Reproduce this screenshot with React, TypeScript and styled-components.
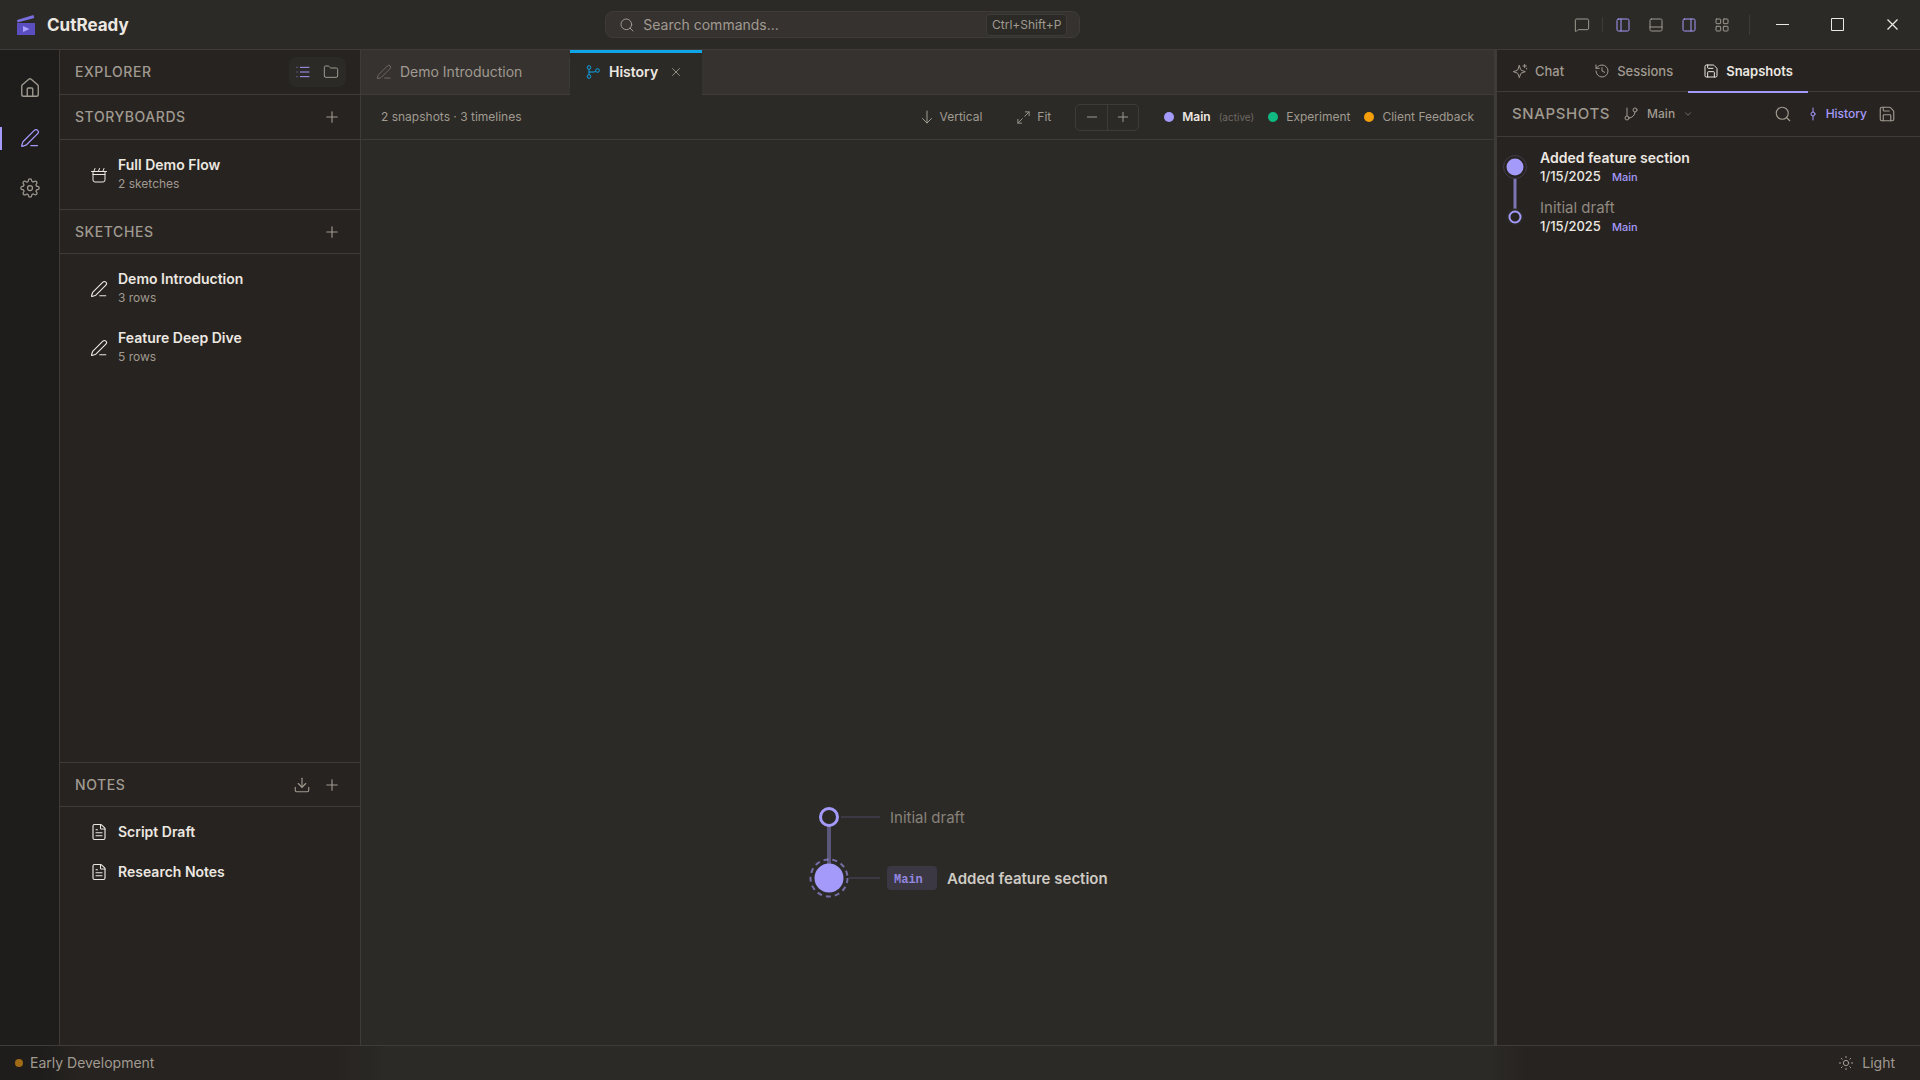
import React from 'react';
import styled, { createGlobalStyle, css } from 'styled-components';
import {
  ChevronDown, Download, FileText, Folder, GitBranch, GitCommitVertical, House, LayoutGrid, List,
  Maximize2, MessageSquare, Minus, PanelBottom, PanelLeft, PanelRight, PenLine, Plus, History,
  Save, Search, Sun, X,
} from 'lucide-react';

const c = {
  rail: '#1e1d1b',
  side: '#272320',
  main: '#2b2a27',
  raised: '#363230',
  line: '#3f3b38',
  text: '#ece8e1',
  dim: '#a09a90',
  faint: '#6e6963',
  accent: '#a49afa',
  blue: '#0ea5e9',
};

const Global = createGlobalStyle`
  *, *::before, *::after { box-sizing: border-box; }
  html, body, #root { height: 100%; margin: 0; }
  body { background: ${c.main}; color: ${c.text}; font: 14px/20px Inter, "Liberation Sans", sans-serif; overflow: hidden; }
  button { font: inherit; color: inherit; background: none; border: 0; padding: 0; cursor: pointer; }
  h1, h2, ul, p { margin: 0; padding: 0; list-style: none; }
  svg { flex: none; display: block; }
`;

const Shell = styled.div`
  display: flex;
  flex-direction: column;
  height: 100%;
`;

const TitleBar = styled.header`
  display: flex;
  align-items: center;
  height: 50px;
  flex: none;
  border-bottom: 1px solid ${c.line};
`;

const Brand = styled.h1`
  display: flex;
  align-items: center;
  gap: 11px;
  padding-left: 16px;
  font-size: 17px;
  font-weight: 700;
`;

const SearchArea = styled.div`
  display: flex;
  flex: 1;
  justify-content: center;
  padding-right: 8px;
`;

const SearchBox = styled.label`
  display: flex;
  align-items: center;
  gap: 8px;
  width: 475px;
  height: 27px;
  padding: 0 12px 0 13px;
  color: ${c.dim};
  background: ${c.raised};
  border: 1px solid ${c.line};
  border-radius: 8px;
`;

const SearchInput = styled.input`
  flex: 1;
  min-width: 0;
  padding: 0;
  font: inherit;
  color: inherit;
  background: none;
  border: 0;
  outline: 0;
  &::placeholder { color: ${c.dim}; opacity: 1; }
`;

const Shortcut = styled.kbd`
  padding: 0 5px;
  font: 12px/20px Inter, sans-serif;
  background: ${c.main};
  border: 1px solid ${c.line};
  border-radius: 4px;
`;

const LayoutControls = styled.div`
  display: flex;
  align-items: center;
`;

const ToolButton = styled.button<{ $on?: boolean }>`
  display: grid;
  place-items: center;
  width: 33px;
  height: 32px;
  color: ${p => (p.$on ? c.accent : c.dim)};
`;

const Rule = styled.span<{ $tall?: boolean }>`
  width: 1px;
  height: ${p => (p.$tall ? 20 : 15)}px;
  margin: ${p => (p.$tall ? '0 5px 0 11px' : '0 3px 0 4px')};
  background: ${c.line};
`;

const WindowButton = styled.button`
  display: grid;
  place-items: center;
  width: 55px;
  height: 49px;
`;

const Body = styled.div`
  display: flex;
  flex: 1;
  min-height: 0;
`;

const Rail = styled.nav`
  display: flex;
  flex-direction: column;
  width: 60px;
  padding-top: 13px;
  background: ${c.rail};
  border-right: 1px solid ${c.line};
`;

const RailButton = styled.button<{ $on?: boolean }>`
  display: grid;
  place-items: center;
  height: 50px;
  color: ${p => (p.$on ? c.accent : c.dim)};
  ${p => p.$on && css`background: linear-gradient(${c.accent}, ${c.accent}) left center / 2px 23px no-repeat;`}
`;

const Sidebar = styled.aside`
  display: flex;
  flex-direction: column;
  width: 301px;
  background: ${c.side};
  border-right: 1px solid ${c.line};
`;

const Section = styled.section<{ $grow?: boolean; $pane?: boolean }>`
  flex: ${p => (p.$grow ? '1' : p.$pane ? '0 0 283px' : 'none')};
  & + & { border-top: 1px solid ${c.line}; }
`;

const PanelHead = styled.div<{ $flush?: boolean }>`
  display: flex;
  align-items: center;
  justify-content: space-between;
  height: ${p => (p.$flush ? 44 : 45)}px;
  padding: 0 14px 0 15px;
  color: ${c.dim};
  border-bottom: 1px solid ${c.line};
`;

const SnapshotsHead = styled(PanelHead)`
  padding-right: 19px;
`;

const Heading = styled.h2<{ $large?: boolean }>`
  font-size: ${p => (p.$large ? 15 : 14)}px;
  font-weight: 500;
  letter-spacing: 0.04em;
  text-transform: uppercase;
`;

const Actions = styled.div`
  display: flex;
  align-items: center;
  gap: 2px;
`;

const IconButton = styled.button<{ $on?: boolean }>`
  display: grid;
  place-items: center;
  width: 28px;
  height: 28px;
  color: ${p => (p.$on ? c.accent : 'inherit')};
`;

const ViewSwitch = styled.div`
  display: flex;
  height: 30px;
  padding-right: 1px;
  align-items: center;
  border-radius: 8px;
  background: ${c.main};
`;

const Items = styled.ul`
  padding: 5px 0;
`;

const Item = styled.button`
  display: flex;
  align-items: center;
  gap: 10px;
  width: 100%;
  padding: 10px 30px;
  text-align: left;
`;

const ItemTitle = styled.span`
  display: block;
  font-weight: 600;
`;

const Meta = styled.span`
  display: block;
  padding-bottom: 2px;
  font-size: 12px;
  line-height: 17px;
  color: ${c.dim};
`;

const Main = styled.main`
  display: flex;
  flex-direction: column;
  flex: 1;
  min-width: 0;
`;

const TabStrip = styled.div`
  display: flex;
  height: 45px;
  background: linear-gradient(${c.line}, ${c.line}) left bottom / 100% 1px no-repeat ${c.raised};
`;

const EditorTab = styled.div<{ $on?: boolean }>`
  display: flex;
  align-items: center;
  gap: 8px;
  padding: 0 16px 1px 15px;
  color: ${c.dim};
  background: linear-gradient(${c.line}, ${c.line}) right center / 1px 29px no-repeat;
  min-width: 209px;
  ${p => p.$on && css`
    min-width: 0;
    color: ${c.text};
    font-weight: 600;
    background: ${c.main};
    box-shadow: inset 0 3px ${c.blue};
  `}
`;

const TabLabel = styled.button`
  display: flex;
  align-items: center;
  gap: 8px;
`;

const TabPen = styled(PenLine)`
  opacity: 0.8;
`;

const CloseTab = styled.button`
  display: grid;
  place-items: center;
  width: 20px;
  height: 20px;
  color: ${c.dim};
`;

const Toolbar = styled.div`
  display: flex;
  align-items: center;
  height: 45px;
  padding: 0 20px;
  font-size: 12px;
  color: ${c.dim};
  border-bottom: 1px solid ${c.line};
`;

const Summary = styled.p`
  flex: 1;
`;

const TextButton = styled.button`
  display: flex;
  align-items: center;
  gap: 6px;
  margin-right: 34px;
`;

const Zoom = styled.div`
  display: flex;
  margin: 0 25px 0 -10px;
  border: 1px solid ${c.line};
  border-radius: 5px;
`;

const ZoomButton = styled.button`
  display: grid;
  place-items: center;
  width: 31px;
  height: 25px;
  & + & { border-left: 1px solid ${c.line}; }
`;

const Legend = styled.ul`
  display: flex;
  gap: 14px;
`;

const LegendItem = styled.li<{ $color: string }>`
  display: flex;
  align-items: center;
  gap: 8px;
  &::before {
    content: '';
    width: 10px;
    height: 10px;
    border-radius: 50%;
    background: ${p => p.$color};
  }
`;

const Strong = styled.strong`
  font-weight: 600;
  color: ${c.text};
`;

const Small = styled.small`
  font-size: 10px;
  color: ${c.faint};
`;

const Canvas = styled.div`
  position: relative;
  flex: 1;
`;

const Graph = styled.svg`
  position: absolute;
  left: calc(50% - 119px);
  bottom: 147px;
  overflow: visible;
`;

const Panel = styled.aside`
  display: flex;
  flex-direction: column;
  width: 426px;
  background: ${c.side};
  border-left: 3px solid ${c.line};
`;

const PanelTabs = styled.div`
  display: flex;
  height: 42px;
  border-bottom: 1px solid ${c.line};
`;

const PanelTab = styled.button<{ $on?: boolean }>`
  display: flex;
  align-items: center;
  gap: 7px;
  height: 43px;
  padding: 0 15px;
  font-size: 13px;
  font-weight: ${p => (p.$on ? 600 : 500)};
  color: ${p => (p.$on ? c.text : c.dim)};
  border-bottom: 2px solid ${p => (p.$on ? c.accent : 'transparent')};
`;

const BranchButton = styled.button`
  display: flex;
  align-items: center;
  gap: 8px;
  margin: 0 auto 0 13px;
  font-size: 12px;
  font-weight: 500;
`;

const HistoryButton = styled.button`
  display: flex;
  align-items: center;
  gap: 5px;
  margin: 0 4px 0 6px;
  font-size: 12px;
  font-weight: 500;
  color: ${c.accent};
`;

const Snapshots = styled.ul`
  padding: 11px 0;
`;

const SnapshotRow = styled.li`
  display: flex;
  gap: 8px;
  height: 50px;
  padding-left: 3px;
`;

const SnapshotTitle = styled.p<{ $on?: boolean }>`
  font-size: ${p => (p.$on ? 14 : 15)}px;
  font-weight: ${p => (p.$on ? 600 : 400)};
  color: ${p => (p.$on ? c.text : '#8f8980')};
`;

const SnapshotMeta = styled.p`
  display: flex;
  gap: 11px;
  font-size: 13px;
  line-height: 16px;
  font-weight: 500;
`;

const Tag = styled.span`
  font-size: 11px;
  line-height: 18px;
  color: ${c.accent};
`;

const Status = styled.footer`
  display: flex;
  align-items: center;
  justify-content: space-between;
  height: 35px;
  flex: none;
  padding: 0 25px 0 15px;
  color: ${c.dim};
  border-top: 1px solid ${c.line};
  background: linear-gradient(90deg, ${c.rail} 40px, ${c.side} 80px, ${c.side} 335px, ${c.main} 385px,
    ${c.main} calc(100% - 430px), ${c.side} calc(100% - 395px));
`;

const StatusItem = styled.span`
  display: flex;
  align-items: center;
  gap: 7px;
`;

const Dot = styled.i`
  width: 8px;
  height: 8px;
  border-radius: 50%;
  background: #a16a14;
`;

const ThemeButton = styled.button`
  display: flex;
  align-items: center;
  gap: 8px;
`;

const Logo = () => (
  <svg width="20" height="24" viewBox="0 0 20 24">
    <path d="M1 7 17.500 2l.8 3L1.600 9.500z" fill="#7b6fe0" />
    <path d="M1 10h18v12H1z" fill="#5a4ec0" />
    <path d="M7 13v6l6.500-3z" fill="#a9a0ff" />
  </svg>
);

const GearIcon = () => (
  <svg width="20" height="20" viewBox="0 0 24 24" fill="none" stroke="currentColor" strokeWidth="1.500" strokeLinecap="round" strokeLinejoin="round" overflow="visible">
    <circle cx="12" cy="12" r="3" />
    <path d="M19.4 15a1.65 1.65 0 0 0 .33 1.820l.06.06a2 2 0 0 1 0 2.830 2 2 0 0 1-2.830 0l-.06-.06a1.650 1.650 0 0 0-1.820-.33 1.650 1.650 0 0 0-1 1.510V21a2 2 0 0 1-2 2 2 2 0 0 1-2-2v-.09A1.650 1.650 0 0 0 9 19.400a1.650 1.650 0 0 0-1.820.33l-.06.06a2 2 0 0 1-2.830 0 2 2 0 0 1 0-2.830l.06-.06a1.650 1.650 0 0 0 .33-1.820 1.650 1.650 0 0 0-1.510-1H3a2 2 0 0 1-2-2 2 2 0 0 1 2-2h.09A1.650 1.650 0 0 0 4.600 9a1.650 1.650 0 0 0-.33-1.820l-.06-.06a2 2 0 0 1 0-2.830 2 2 0 0 1 2.830 0l.06.06a1.650 1.650 0 0 0 1.820.33H9a1.650 1.650 0 0 0 1-1.510V3a2 2 0 0 1 2-2 2 2 0 0 1 2 2v.09a1.650 1.650 0 0 0 1 1.510 1.650 1.650 0 0 0 1.820-.33l.06-.06a2 2 0 0 1 2.830 0 2 2 0 0 1 0 2.830l-.06.06a1.650 1.650 0 0 0-.33 1.820V9a1.650 1.650 0 0 0 1.510 1H21a2 2 0 0 1 2 2 2 2 0 0 1-2 2h-.09a1.650 1.650 0 0 0-1.510 1z" />
  </svg>
);

const BoardIcon = () => (
  <svg width="18" height="18" viewBox="0 0 18 18" fill="none" stroke="currentColor" strokeLinecap="round" strokeLinejoin="round">
    <path d="M1.500 5.500h15M3 8.500h12M3 5.500V14a2 2 0 0 0 2 2h8a2 2 0 0 0 2-2V5.500M4 5l1-2.500M8.500 5l1-2.500M13 5l1-2.500" />
  </svg>
);

const TimelineIcon = () => (
  <svg width="16" height="16" viewBox="0 0 16 16" fill="none" stroke={c.blue}>
    <circle cx="4" cy="3.500" r="1.800" /><circle cx="4" cy="12.500" r="1.800" /><circle cx="12.500" cy="6.500" r="1.800" />
    <path d="M4 5.300v5.400M4 8h5c1 0 1.500-.5 1.800-1" />
  </svg>
);

const StarIcon = () => (
  <svg width="16" height="16" viewBox="0 0 24 24" fill="none" stroke="currentColor" strokeWidth="1.500" strokeLinecap="round" strokeLinejoin="round">
    <path d="M11 4l1.900 5.600a2.500 2.500 0 0 0 1.600 1.600L20 13l-5.500 1.900a2.500 2.500 0 0 0-1.600 1.600L11 22l-1.900-5.500a2.500 2.500 0 0 0-1.600-1.600L2 13l5.500-1.800a2.500 2.500 0 0 0 1.600-1.600zM19 2v5M16.500 4.500h5M22 8v1" />
  </svg>
);

const DownIcon = () => (
  <svg width="14" height="14" viewBox="0 0 14 14" fill="none" stroke="currentColor" strokeLinecap="round" strokeLinejoin="round">
    <path d="M7 1v12M2.500 8.500 7 13l4.500-4.500" />
  </svg>
);

const thin = { strokeWidth: 1.5 };

const Entry = ({ icon, title, meta }: { icon: React.ReactNode; title: string; meta?: string }) => (
  <li>
    <Item>
      {icon}
      <span>
        <ItemTitle>{title}</ItemTitle>
        {meta && <Meta>{meta}</Meta>}
      </span>
    </Item>
  </li>
);

export default function App() {
  return (
    <Shell>
      <Global />
      <TitleBar>
        <Brand><Logo />CutReady</Brand>
        <SearchArea>
          <SearchBox>
            <Search size={16} {...thin} />
            <SearchInput type="text" placeholder="Search commands..." aria-label="Search commands" />
            <Shortcut>Ctrl+Shift+P</Shortcut>
          </SearchBox>
        </SearchArea>
        <LayoutControls>
          <ToolButton aria-label="Feedback"><MessageSquare size={16} {...thin} /></ToolButton>
          <Rule />
          <ToolButton $on aria-label="Toggle sidebar"><PanelLeft size={16} {...thin} /></ToolButton>
          <ToolButton aria-label="Toggle bottom panel"><PanelBottom size={16} {...thin} /></ToolButton>
          <ToolButton $on aria-label="Toggle right panel"><PanelRight size={16} {...thin} /></ToolButton>
          <ToolButton aria-label="Layout"><LayoutGrid size={16} {...thin} /></ToolButton>
          <Rule $tall />
          <WindowButton aria-label="Minimize"><svg width="13" height="13" stroke="currentColor"><path d="M0 6.500h13" /></svg></WindowButton>
          <WindowButton aria-label="Maximize"><svg width="13" height="13" fill="none" stroke="currentColor"><path d="M.5.5h12v12H.5z" /></svg></WindowButton>
          <WindowButton aria-label="Close"><svg width="11" height="11" stroke="currentColor" strokeWidth="1.300"><path d="m.5.5 10 10m0-10-10 10" /></svg></WindowButton>
        </LayoutControls>
      </TitleBar>
      <Body>
        <Rail>
          <RailButton aria-label="Home"><House size={22} {...thin} /></RailButton>
          <RailButton $on aria-label="Editor"><PenLine size={20} {...thin} /></RailButton>
          <RailButton aria-label="Settings"><GearIcon /></RailButton>
        </Rail>
        <Sidebar>
          <PanelHead>
            <Heading>Explorer</Heading>
            <ViewSwitch>
              <IconButton $on aria-label="List view"><List size={16} {...thin} /></IconButton>
              <IconButton aria-label="Folder view"><Folder size={16} {...thin} /></IconButton>
            </ViewSwitch>
          </PanelHead>
          <Section>
            <PanelHead>
              <Heading>Storyboards</Heading>
              <IconButton aria-label="Add storyboard"><Plus size={18} {...thin} /></IconButton>
            </PanelHead>
            <Items><Entry icon={<BoardIcon />} title="Full Demo Flow" meta="2 sketches" /></Items>
          </Section>
          <Section $grow>
            <PanelHead $flush>
              <Heading>Sketches</Heading>
              <IconButton aria-label="Add sketch"><Plus size={18} {...thin} /></IconButton>
            </PanelHead>
            <Items>
              <Entry icon={<PenLine size={18} {...thin} />} title="Demo Introduction" meta="3 rows" />
              <Entry icon={<PenLine size={18} {...thin} />} title="Feature Deep Dive" meta="5 rows" />
            </Items>
          </Section>
          <Section $pane>
            <PanelHead $flush>
              <Heading>Notes</Heading>
              <Actions>
                <IconButton aria-label="Import note"><Download size={18} {...thin} /></IconButton>
                <IconButton aria-label="Add note"><Plus size={18} {...thin} /></IconButton>
              </Actions>
            </PanelHead>
            <Items>
              <Entry icon={<FileText size={18} {...thin} />} title="Script Draft" />
              <Entry icon={<FileText size={18} {...thin} />} title="Research Notes" />
            </Items>
          </Section>
        </Sidebar>
        <Main>
          <TabStrip>
            <EditorTab><TabLabel><TabPen size={16} strokeWidth={1} />Demo Introduction</TabLabel></EditorTab>
            <EditorTab $on>
              <TabLabel><TimelineIcon />History</TabLabel>
              <CloseTab aria-label="Close History"><X size={14} {...thin} /></CloseTab>
            </EditorTab>
          </TabStrip>
          <Toolbar>
            <Summary>2 snapshots · 3 timelines</Summary>
            <TextButton><DownIcon />Vertical</TextButton>
            <TextButton><Maximize2 size={15} {...thin} />Fit</TextButton>
            <Zoom>
              <ZoomButton aria-label="Zoom out"><Minus size={16} {...thin} /></ZoomButton>
              <ZoomButton aria-label="Zoom in"><Plus size={16} {...thin} /></ZoomButton>
            </Zoom>
            <Legend>
              <LegendItem $color={c.accent}><Strong>Main</Strong><Small>(active)</Small></LegendItem>
              <LegendItem $color="#10b981">Experiment</LegendItem>
              <LegendItem $color="#f59e0b">Client Feedback</LegendItem>
            </Legend>
          </Toolbar>
          <Canvas>
            <Graph width="300" height="100" fontFamily="Inter, sans-serif">
              <path d="M32 19h39M40 80h31" stroke={c.accent} strokeOpacity="0.14" strokeWidth="2" />
              <path d="M20 19v61" stroke={c.accent} strokeOpacity="0.4" strokeWidth="4" />
              <circle cx="20" cy="19" r="8.500" fill={c.main} stroke={c.accent} strokeWidth="3" />
              <circle cx="20" cy="80" r="18.500" fill="none" stroke={c.accent} strokeOpacity="0.6" strokeWidth="2" strokeDasharray="5 4" />
              <circle cx="20" cy="80" r="14.500" fill={c.accent} />
              <text x="81" y="25" fontSize="15" fill="#87827a">Initial draft</text>
              <rect x="78" y="68" width="50" height="24" rx="4" fill="#3b3743" />
              <text x="85" y="85" fontSize="12" fontWeight="700" fill="#9388e0" fontFamily="Liberation Mono, monospace">Main</text>
              <text x="138" y="86" fontSize="15" fontWeight="600" fill="#cfcbc4">Added feature section</text>
            </Graph>
          </Canvas>
        </Main>
        <Panel>
          <PanelTabs>
            <PanelTab><StarIcon />Chat</PanelTab>
            <PanelTab><History size={16} {...thin} />Sessions</PanelTab>
            <PanelTab $on><Save size={16} {...thin} />Snapshots</PanelTab>
          </PanelTabs>
          <SnapshotsHead>
            <Heading $large>Snapshots</Heading>
            <BranchButton><GitBranch size={16} {...thin} />Main<ChevronDown size={10} {...thin} /></BranchButton>
            <Actions>
              <IconButton aria-label="Search snapshots"><Search size={18} {...thin} /></IconButton>
              <HistoryButton><GitCommitVertical size={16} {...thin} />History</HistoryButton>
              <IconButton aria-label="Save snapshot"><Save size={18} {...thin} /></IconButton>
            </Actions>
          </SnapshotsHead>
          <Snapshots>
            <SnapshotRow>
              <svg width="32" height="50" fill="none">
                <path d="M15 19v31" stroke="#7c74b4" strokeWidth="3" />
                <circle cx="15" cy="19" r="11.500" fill={c.side} stroke="#413b4b" />
                <circle cx="15" cy="19" r="8.500" fill={c.accent} />
              </svg>
              <div>
                <SnapshotTitle $on>Added feature section</SnapshotTitle>
                <SnapshotMeta><time>1/15/2025</time><Tag>Main</Tag></SnapshotMeta>
              </div>
            </SnapshotRow>
            <SnapshotRow>
              <svg width="32" height="50" fill="none">
                <path d="M15 0v13" stroke="#7c74b4" strokeWidth="3" />
                <circle cx="15" cy="19" r="8.500" fill={c.main} />
                <circle cx="15" cy="19" r="5.500" fill={c.side} stroke={c.accent} strokeWidth="2" />
              </svg>
              <div>
                <SnapshotTitle>Initial draft</SnapshotTitle>
                <SnapshotMeta><time>1/15/2025</time><Tag>Main</Tag></SnapshotMeta>
              </div>
            </SnapshotRow>
          </Snapshots>
        </Panel>
      </Body>
      <Status>
        <StatusItem><Dot />Early Development</StatusItem>
        <ThemeButton><Sun size={16} {...thin} />Light</ThemeButton>
      </Status>
    </Shell>
  );
}
